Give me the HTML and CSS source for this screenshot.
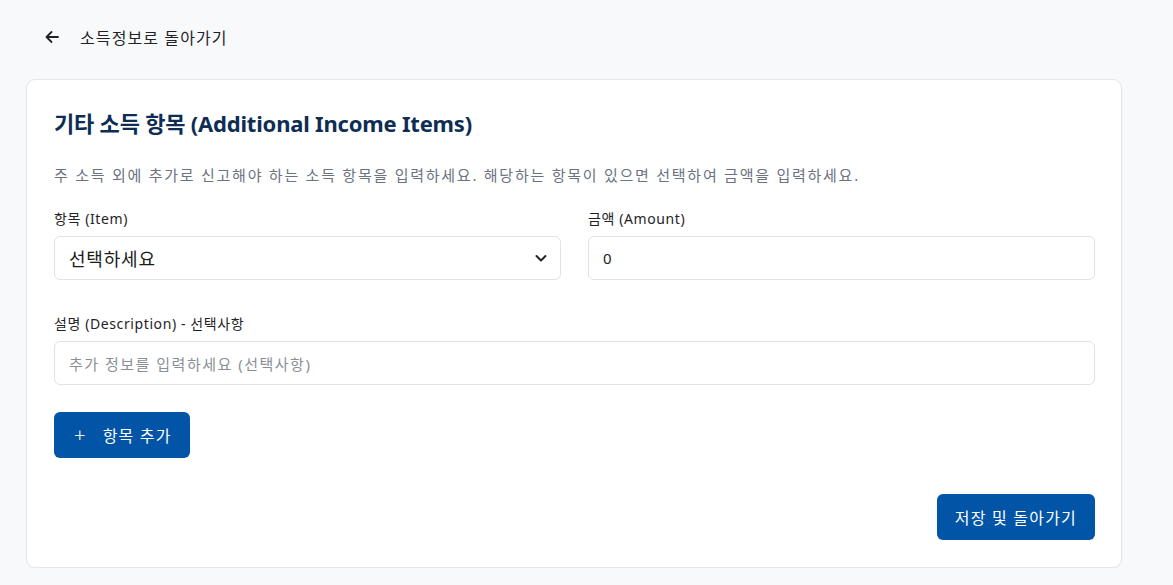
FILE: index.html
```html
<!DOCTYPE html>
<html lang="ko">
<head>
<meta charset="utf-8">
<link rel="stylesheet" href="styles.css">
</head>
<body>
<div class="page">
  <a class="back" href="#">
    <svg class="back-icon" width="16" height="16" viewBox="0 0 16 16" fill="none" stroke="#222" stroke-width="1.8" stroke-linecap="round" stroke-linejoin="round"><path d="M14 8H2.5M7.5 3L2.5 8l5 5"/></svg>
    <span>소득정보로 돌아가기</span>
  </a>
  <div class="card">
    <h1 class="title">기타 소득 항목 (Additional Income Items)</h1>
    <p class="desc">주 소득 외에 추가로 신고해야 하는 소득 항목을 입력하세요. 해당하는 항목이 있으면 선택하여 금액을 입력하세요.</p>
    <div class="row">
      <div class="field">
        <label class="label">항목 (Item)</label>
        <div class="select">
          <span class="select-text">선택하세요</span>
          <svg width="14" height="14" viewBox="0 0 14 14" fill="none" stroke="#222" stroke-width="2" stroke-linecap="round" stroke-linejoin="round"><path d="M2.5 5l4.5 4.5L11.5 5"/></svg>
        </div>
      </div>
      <div class="field">
        <label class="label">금액 (Amount)</label>
        <div class="input value">0</div>
      </div>
    </div>
    <div class="field full">
      <label class="label">설명 (Description) - 선택사항</label>
      <div class="input placeholder">추가 정보를 입력하세요 (선택사항)</div>
    </div>
    <div class="actions-left">
      <button class="btn add"><span class="plus">+</span>항목 추가</button>
    </div>
    <div class="actions-right">
      <button class="btn save">저장 및 돌아가기</button>
    </div>
  </div>
</div>
</body>
</html>
```
FILE: styles.css
```css
* { box-sizing: border-box; }
html, body { margin: 0; padding: 0; }
body {
  background: #f8f9fb;
  font-family: "Noto Sans", "Noto Sans CJK KR", sans-serif;
  color: #1f2328;
}
.page {
  padding: 26px 51px 0 26px;
}
.back {
  display: flex;
  align-items: center;
  gap: 20px;
  padding-left: 18px;
  height: 22px;
  text-decoration: none;
  color: #1f2328;
  font-size: 16px;
  letter-spacing: 1.1px;
}
.back-icon { display: block; }
.card {
  margin-top: 31px;
  background: #fff;
  border: 1px solid #e4e6ea;
  border-radius: 9px;
  box-shadow: 0 1px 2px rgba(0,0,0,0.04);
  padding: 27px 26px 27px 27px;
}
.title {
  margin: 0;
  font-size: 22px;
  line-height: 32px;
  font-weight: 700;
  color: #0d2d55;
  letter-spacing: -0.2px;
}
.desc {
  margin: 24px 0 0;
  font-size: 15px;
  line-height: 24px;
  color: #6b7280;
  letter-spacing: 1.75px;
}
.row {
  display: flex;
  gap: 27px;
  margin-top: 22px;
}
.field { flex: 1; display: flex; flex-direction: column; }
.field.full { margin-top: 34px; }
.label {
  font-size: 14px;
  line-height: 20px;
  color: #1f2328;
  margin-bottom: 7px;
  letter-spacing: 0.6px;
}
.select, .input {
  height: 44px;
  border: 1px solid #dfe2e6;
  border-radius: 6px;
  display: flex;
  align-items: center;
  padding: 0 14px;
  background: #fff;
}
.select { justify-content: space-between; padding-right: 12px; }
.select-text { font-size: 18px; color: #1a1a1a; letter-spacing: 0.8px; }
.input.value { font-size: 15px; color: #1f2328; }
.input.placeholder { font-size: 15px; color: #8a8f96; letter-spacing: 1.5px; }
.actions-left { margin-top: 27px; display: flex; }
.actions-right { margin-top: 36px; display: flex; justify-content: flex-end; }
.btn {
  border: none;
  border-radius: 6px;
  background: #0254a6;
  color: #fff;
  font-family: inherit;
  font-size: 16px;
  letter-spacing: 1.2px;
  height: 46px;
  display: flex;
  align-items: center;
  cursor: pointer;
}
.add { padding: 0 18px 0 20px; }
.plus { font-size: 20px; font-weight: 300; margin-right: 16px; line-height: 1; }
.save { padding: 0 18px; }
```
